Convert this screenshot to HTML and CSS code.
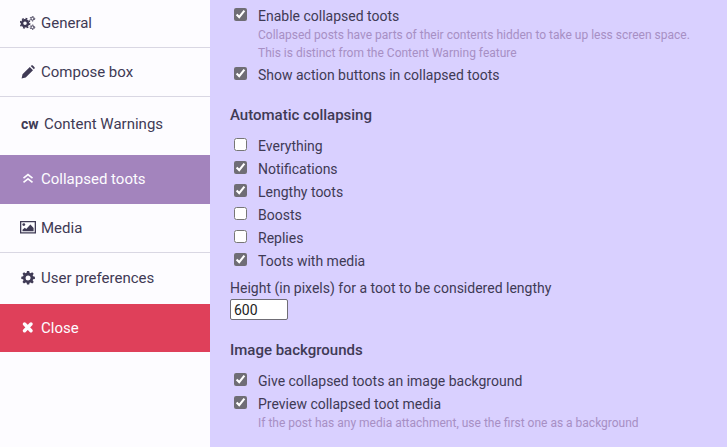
FILE: index.html
```html
<!DOCTYPE html>
<html lang="en">
<head>
<meta charset="utf-8">
<title>Settings</title>
<link rel="stylesheet" href="styles.css">
</head>
<body>
<div class="app">
  <nav class="nav">
    <a class="item h48 line nudge"><svg class="ic" viewBox="0 0 16 14"><g fill="none" stroke="currentColor"><circle cx="5" cy="7.200" r="3" stroke-width="2.500"/><circle cx="5" cy="7.200" r="4.700" stroke-width="1.500" stroke-dasharray="1.850 1.840"/><circle cx="12.400" cy="2.700" r="1.400" stroke-width="1"/><circle cx="12.400" cy="2.700" r="2.300" stroke-width="1" stroke-dasharray="1.200 1.210"/><circle cx="12.400" cy="11.300" r="1.400" stroke-width="1"/><circle cx="12.400" cy="11.300" r="2.300" stroke-width="1" stroke-dasharray="1.200 1.210"/></g></svg><span>General</span></a>
    <a class="item h49 line"><svg class="ic" viewBox="0 0 16 14"><path d="M2.500 9.300 9.800 2l3.200 3.200-7.300 7.300-4.100 1.100zM10.700 1.100l.7-.6c.5-.4 1-.4 1.400 0l1.700 1.700c.4.400.4 1 0 1.400l-.6.700z"/></svg><span>Compose box</span></a>
    <a class="item h58 cwrow"><b class="cw">cw</b><span>Content Warnings</span></a>
    <a class="item h49 active nudge"><svg class="ic" viewBox="0 0 16 14"><path fill="none" stroke="currentColor" stroke-width="1.700" d="M3.500 6.200 8 2.600l4.500 3.600M3.500 10.400 8 6.800l4.500 3.600"/></svg><span>Collapsed toots</span></a>
    <a class="item h49 line"><svg class="ic" viewBox="0 0 16 14"><path fill-rule="evenodd" d="M0 0h16v12.500H0zM1.300 1.300v9.900h13.400V1.300z"/><circle cx="3.800" cy="3.600" r="1.400"/><path d="M2.500 10.300V8.800l2.300-2 1.400 1.300 4.200-4.500 3.200 3.300v3.400z"/></svg><span>Media</span></a>
    <a class="item h51 nudge"><svg class="ic" viewBox="0 0 16 14"><path fill-rule="evenodd" d="M7 0h2.200l.4 1.800 1 .4 1.600-1 1.500 1.500-1 1.600.4 1 1.800.4v2.200l-1.800.4-.4 1 1 1.600-1.500 1.500-1.600-1-1 .4-.4 1.800H7l-.4-1.800-1-.4-1.600 1-1.500-1.500 1-1.600-.4-1-1.800-.4V5.700l1.800-.4.4-1-1-1.600L4 1.200l1.600 1 1-.4zM8.100 4.500a2.500 2.500 0 1 0 0 5 2.500 2.500 0 0 0 0-5z"/></svg><span>User preferences</span></a>
    <a class="item h48 close"><svg class="ic" viewBox="0 0 16 14"><path fill="none" stroke="currentColor" stroke-width="3.500" stroke-linecap="round" d="M4.500 3.100 11 9.700M11 3.100 4.500 9.700"/></svg><span>Close</span></a>
  </nav>
  <main class="content">
    <label class="check"><input type="checkbox" checked><span>Enable collapsed toots</span></label>
    <p class="hint">Collapsed posts have parts of their contents hidden to take up less screen space.<br>This is distinct from the Content Warning feature</p>
    <label class="check"><input type="checkbox" checked><span>Show action buttons in collapsed toots</span></label>
    <h3 class="title auto">Automatic collapsing</h3>
    <label class="check"><input type="checkbox"><span>Everything</span></label>
    <label class="check"><input type="checkbox" checked><span>Notifications</span></label>
    <label class="check"><input type="checkbox" checked><span>Lengthy toots</span></label>
    <label class="check"><input type="checkbox"><span>Boosts</span></label>
    <label class="check"><input type="checkbox"><span>Replies</span></label>
    <label class="check"><input type="checkbox" checked><span>Toots with media</span></label>
    <div class="field">
      <label class="flabel" for="h">Height (in pixels) for a toot to be considered lengthy</label>
      <input class="num" id="h" type="text" value="600">
    </div>
    <h3 class="title img">Image backgrounds</h3>
    <label class="check"><input type="checkbox" checked><span>Give collapsed toots an image background</span></label>
    <label class="check"><input type="checkbox" checked><span>Preview collapsed toot media</span></label>
    <p class="hint">If the post has any media attachment, use the first one as a background</p>
  </main>
</div>
</body>
</html>
```
FILE: styles.css
```css
* { box-sizing: border-box; }
html, body { margin: 0; height: 100%; overflow: hidden; }
body { font-family: Roboto, sans-serif; font-size: 14px; color: #3f3a55; }
.app { display: flex; width: 727px; height: 447px; overflow: hidden; }
.nav { width: 210px; flex: none; background: #fdfcff; display: flex; flex-direction: column; }
.item { display: flex; align-items: center; padding-left: 20px; font-size: 15px; color: #3f3a55; }
.item span { margin-left: 5px; }
.h48 { height: 48px; }
.h49 { height: 49px; }
.h51 { height: 51px; }
.h58 { height: 58px; }
.nudge { padding-bottom: 2px; }
.cwrow { padding-bottom: 4px; }
.line { border-bottom: 1px solid #d9d7e3; }
.ic { width: 16px; height: 14px; fill: currentColor; flex: none; }
.cw { font-weight: 700; font-size: 14px; width: 18px; margin-left: 1px; }
.active { background: #a384bd; color: #fdfcff; }
.close { background: #df405a; color: #fdfcff; }
.content { flex: 1; background: #d9d0ff; padding: 4px 20px 0; overflow: hidden; }
.check { display: flex; align-items: center; height: 23px; padding-left: 4px; font-size: 14px; color: #3f3a55; }
.check input { width: 13px; height: 13px; margin: 0 11px 2px 0; accent-color: #6f6d75; }
.hint { margin: -1px 0 0 28px; font-size: 12px; line-height: 18px; color: #a78fc4; }
.hint + .check { margin-top: 1px; }
.title { margin: 0; font-size: 15px; font-weight: 500; color: #3f3a55; line-height: 20px; }
.auto { margin-top: 19px; margin-bottom: 9px; }
.field { margin-top: 6px; }
.flabel { display: block; line-height: 20px; }
.num { display: block; width: 58px; height: 21px; padding: 1px 3px; margin-top: 1px; font: 14px Roboto, sans-serif; color: #222; background: #fff; border: 1px solid #6f6d75; border-radius: 2px; }
.img { margin-top: 20px; margin-bottom: 9px; }
```
